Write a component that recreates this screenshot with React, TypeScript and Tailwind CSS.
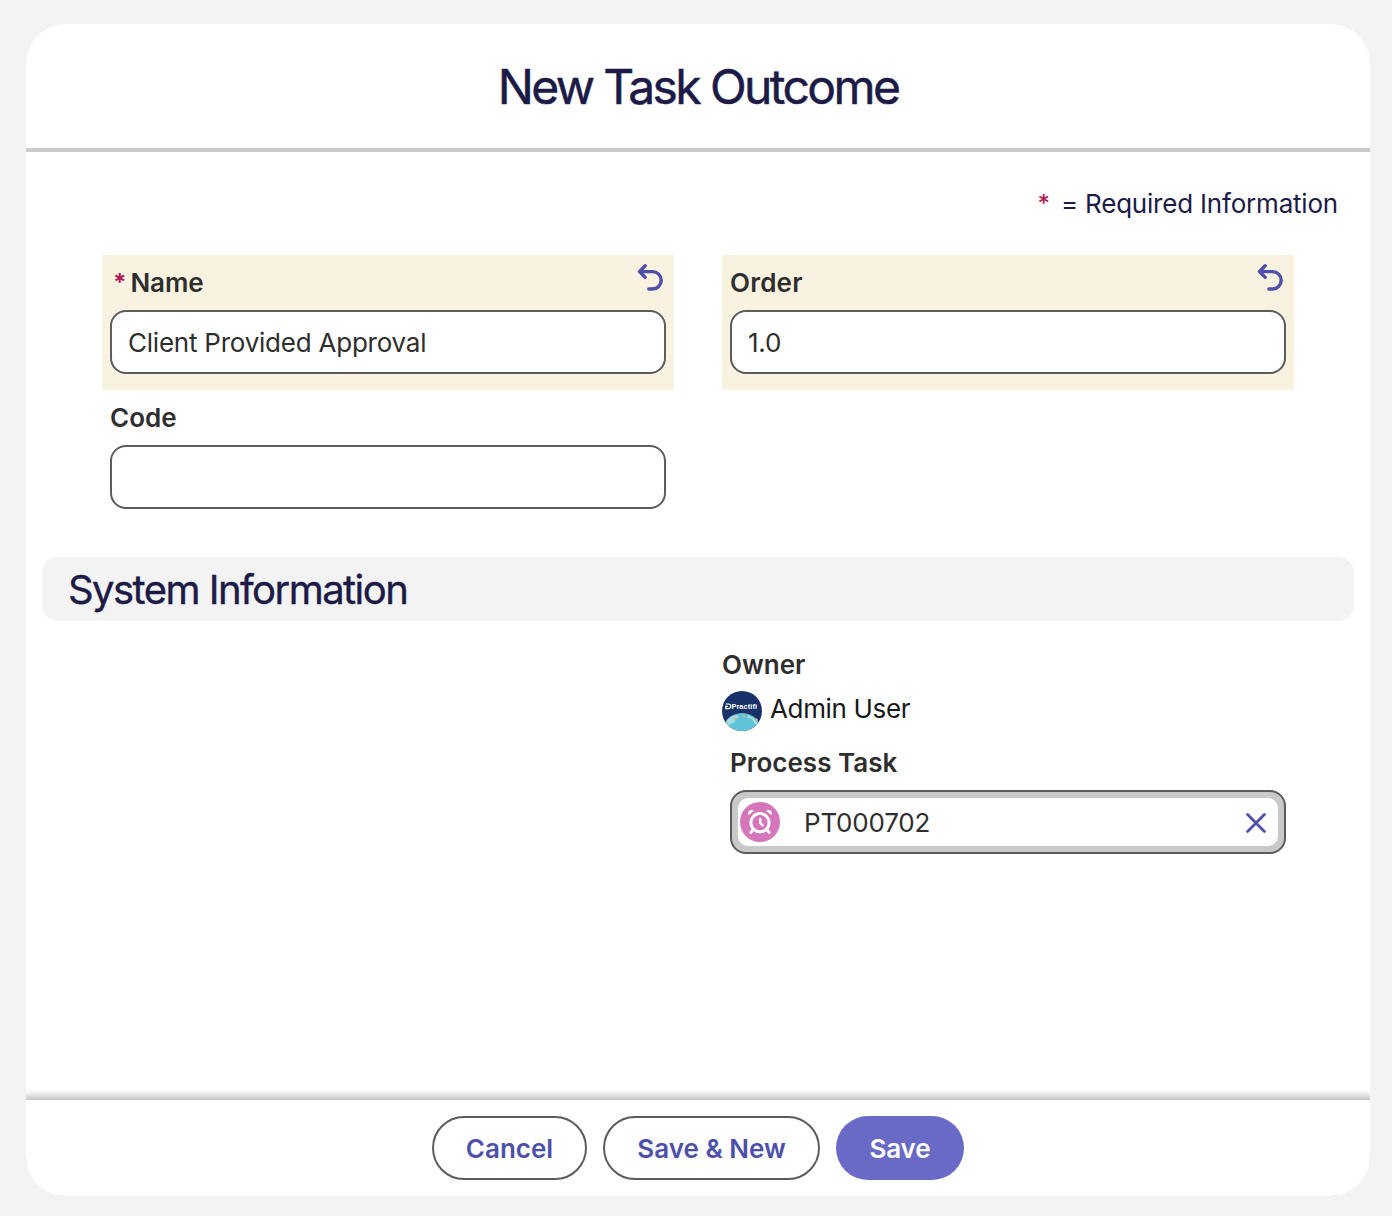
import { useState } from "react"
import type { ReactNode } from "react"

type FieldProps = {
  label:string
  value:string
  onChange:(value:string)=>void
  labelClass?:string
  required?:boolean
  edited?:boolean
  onUndo?:()=>void
}

export default function App() {
  const [ name, setName ] = useState('Client Provided Approval')
  const [ order, setOrder ] = useState('1.0')
  const [ code, setCode ] = useState('')
  const [ task, setTask ] = useState('PT000702')

  return(
    <div className="flex h-[1216px] w-[1392px] bg-[#f3f3f3] pt-6 pb-5 pl-[26px] pr-[22px] font-['Inter',sans-serif] text-[26px] leading-9 text-[#2e2e2e]">
      <div className="flex flex-1 flex-col overflow-hidden rounded-[40px] bg-white">
        <header className="flex h-32 shrink-0 items-center justify-center border-b-4 border-[#c9c9c9] pt-0.5">
          <h1 className="text-5xl tracking-[-2.6px] text-[#1c1b47] [-webkit-text-stroke:0.5px_#1c1b47]">New Task Outcome</h1>
        </header>

        <main className="flex-1 px-4">
          <p className="flex justify-end pt-[34px] pr-4 text-[#1c1b47]">
            <span className="mr-[11px] text-2xl leading-9 font-medium text-[#b01c56]">*</span>
            <span className="tracking-[-0.2px]">= Required Information</span>
          </p>

          <div className="mt-[33px] grid grid-cols-2 gap-x-12 px-[60px]">
            <Field
              label="Name"
              labelClass="tracking-[-0.1px]"
              value={name}
              onChange={setName}
              onUndo={()=>setName('')}
              required
              edited/>
            <Field
              label="Order"
              labelClass="tracking-[0.2px]"
              value={order}
              onChange={setOrder}
              onUndo={()=>setOrder('')}
              edited/>
            <Field label="Code" value={code} onChange={setCode}/>
          </div>

          <h2 className="mt-8 flex h-16 items-center rounded-2xl bg-[#f3f3f3] pt-0.5 pl-[26px] text-[40px] tracking-[-1.55px] text-[#1c1b47] [-webkit-text-stroke:0.4px_#1c1b47]">
            System Information
          </h2>

          <div className="grid grid-cols-2 gap-x-12 px-[60px] pt-[26px]">
            <div className="col-start-2">
              <Label>Owner</Label>
              <div className="mt-2 flex h-10 items-center gap-2">
                <Avatar/>
                <span className="-mt-1 tracking-[-0.35px] text-[#181818]">Admin User</span>
              </div>
              <div className="px-2 pt-[14px]">
                <Label>Process Task</Label>
                <Lookup value={task} onClear={()=>setTask('')}/>
              </div>
            </div>
          </div>
        </main>

        <footer className="flex h-24 shrink-0 items-start justify-center gap-4 bg-white pt-4 shadow-[0_0_7px_4px_#bdbdbd]">
          <FooterButton className="w-[155px]">Cancel</FooterButton>
          <FooterButton className="w-[217px]">Save &amp; New</FooterButton>
          <button className="h-16 w-32 rounded-full bg-[#686ac6] pt-0.5 font-semibold tracking-[-0.1px] text-white">Save</button>
        </footer>
      </div>
    </div>
  )
}

const Label = (props:{children:ReactNode, className?:string}) => {
  return(
    <p className={`font-semibold ${props.className ?? ''}`}>{props.children}</p>
  )
}

const Field = (props:FieldProps) => {
  return(
    <div className={props.edited ? 'h-[135px] bg-[#faf2e0] px-2 pt-[10px]' : 'h-[135px] px-2 pt-[10px]'}>
      <div className="flex h-9 items-start">
        { props.required && <span className="mr-1 ml-[3px] text-2xl leading-9 font-bold text-[#b01c56]">*</span> }
        <Label className={props.labelClass}>{props.label}</Label>
        { props.edited && (
          <button className="-mt-0.5 mr-0.5 ml-auto" aria-label="Undo" onClick={props.onUndo}>
            <UndoIcon/>
          </button>
        )}
      </div>
      <input
        className="mt-[9px] block h-16 w-full rounded-2xl border-2 border-[#5c5c5c] bg-white px-4 tracking-[-0.23px] outline-none"
        aria-label={props.label}
        value={props.value}
        onChange={(e)=>props.onChange(e.target.value)}/>
    </div>
  )
}

const Lookup = (props:{value:string, onClear:()=>void}) => {
  return(
    <div className="mt-[9px] h-16 rounded-2xl border-2 border-[#5c5c5c] bg-[#c9c9c9] p-1.5">
      <div className="flex h-12 items-center rounded-[10px] bg-white pl-0.5 pr-3">
        <TaskIcon/>
        <span className="ml-6 pt-0.5 tracking-[-0.2px]">{props.value}</span>
        <button className="ml-auto pt-0.5" aria-label="Clear" onClick={props.onClear}>
          <svg className="h-5 w-5" viewBox="0 0 20 20" fill="none" stroke="#4d50ab" strokeWidth="2.8" strokeLinecap="round">
            <path d="M1.6 1.6 18.4 18.4M18.4 1.6 1.6 18.4"/>
          </svg>
        </button>
      </div>
    </div>
  )
}

const FooterButton = (props:{children:ReactNode, className:string}) => {
  return(
    <button className={`h-16 rounded-full border-2 border-[#5c5c5c] bg-white pt-0.5 font-semibold text-[#4d50ab] ${props.className}`}>
      {props.children}
    </button>
  )
}

const UndoIcon = () => {
  return(
    <svg className="h-7 w-7" viewBox="0 0 28 28" fill="none" stroke="#4d50ab" strokeWidth="3.4" strokeLinecap="round" strokeLinejoin="round">
      <path d="M9.2 2.8 3.4 8.6 9.2 14.4M4 8.6H16.5A8.7 8.7 0 0 1 16.5 26H12.8"/>
    </svg>
  )
}

const TaskIcon = () => {
  return(
    <svg className="h-10 w-10" viewBox="0 0 40 40" fill="none" stroke="#fff" strokeLinecap="round" strokeLinejoin="round">
      <circle cx="20" cy="20" r="20" fill="#d575ba" stroke="none"/>
      <circle cx="20" cy="20.7" r="9.1" strokeWidth="3"/>
      <path d="M20.2 17V20.8l2.4 2.6" strokeWidth="2.4"/>
      <path d="M13 27.8 10.9 30.3M27 27.8 29.1 30.3" strokeWidth="3"/>
      <path d="M8.7 12.2C8.2 9.8 10.4 8 12.9 8.7ZM31.3 12.2C31.8 9.8 29.6 8 27.1 8.7Z" fill="#fff" strokeWidth="1.2"/>
    </svg>
  )
}

const Avatar = () => {
  return(
    <svg className="h-10 w-10" viewBox="0 0 40 40">
      <defs>
        <clipPath id="avatar"><circle cx="20" cy="20" r="20"/></clipPath>
      </defs>
      <g clipPath="url(#avatar)">
        <rect width="40" height="40" fill="#18316b"/>
        <circle cx="20" cy="42" r="20" fill="#5fc3d9"/>
        <path d="M5 29l5-4 5-1 2 2-3 2-2 4-4 1-3 4zM26 24l6 3 5 7-4-1-3-5-5-1z" fill="#a5dce3"/>
        <path d="M12.5 26.5h2.4v2h-2.4zM21 23.6h2v2.6h-2zM34 27l2 1.6-1 1.6-1.6-1.6zM4 31.5h2v2h-2z" fill="#e6ac72"/>
        <path d="M3.6 13H6.4a2.3 2.3 0 0 1 0 4.6H3.8V15.4H6" fill="none" stroke="#fff" strokeWidth="1.2"/>
        <text className="font-['Liberation_Sans',sans-serif]" x="9.4" y="17.8" fontSize="7.4" fontWeight="700" fill="#fff" textLength="25.6">Practifi</text>
      </g>
    </svg>
  )
}
